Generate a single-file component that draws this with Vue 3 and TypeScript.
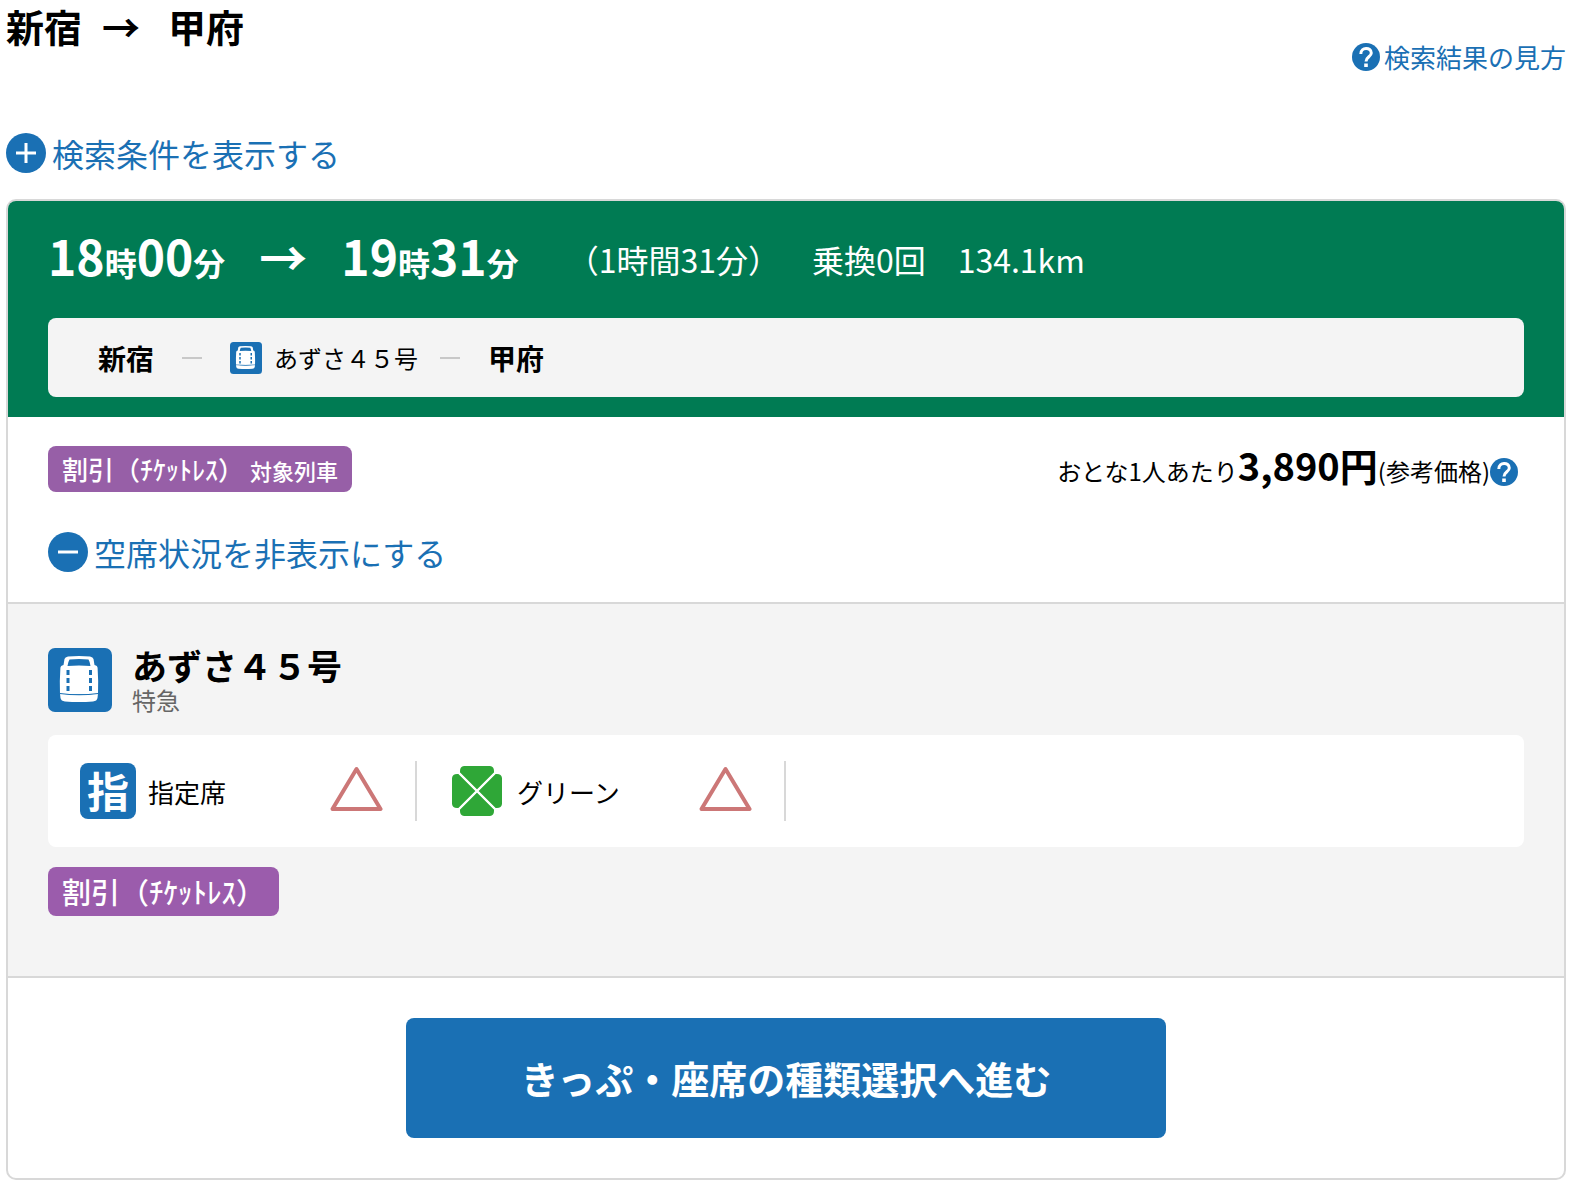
<script setup lang="ts">
import { defineComponent, h, ref } from 'vue'

interface Seat {
  kind: 'reserved' | 'green'
  label: string
}

const seats: Seat[] = [
  { kind: 'reserved', label: '指定席' },
  { kind: 'green', label: 'グリーン' },
]

const vacancyOpen = ref(true)

const TrainIcon = defineComponent({
  setup() {
    return () =>
      h('svg', { viewBox: '0 0 64 64', 'aria-hidden': 'true' }, [
        h('rect', { width: 64, height: 64, rx: 7, fill: '#1a70b4' }),
        h('path', {
          fill: '#fff',
          d: 'M20 8.500Q31 7.500 42 8.500Q45 9 45.500 11L46.500 17Q49.500 17.500 49.600 20Q50.500 32 50 46H12Q11.500 32 12.400 20Q12.500 17.500 15.500 17L16.500 11Q17 9 20 8.500Z',
        }),
        h('path', {
          fill: '#1a70b4',
          d: 'M21.500 11.500Q31 10.500 40.500 11.500Q42 14 42.500 18Q31 17 19.500 18Q20 14 21.500 11.500Z',
        }),
        h('path', {
          stroke: '#1a70b4',
          'stroke-width': 3,
          'stroke-dasharray': '5 3',
          fill: 'none',
          d: 'M20 22V43M42.500 22V43',
        }),
        h('path', {
          fill: '#fff',
          d: 'M12 45.500Q31 48 50 45.500L49.500 50Q49 53 45 53.500Q31 54.500 17 53.500Q13 53 12.500 50Z',
        }),
        h('path', {
          stroke: '#1a70b4',
          'stroke-width': 1.2,
          fill: 'none',
          d: 'M12 45.500Q31 48 50 45.500',
        }),
      ])
  },
})

const HelpIcon = defineComponent({
  setup() {
    return () =>
      h('svg', { viewBox: '0 0 28 28', 'aria-hidden': 'true' }, [
        h('circle', { cx: 14, cy: 14, r: 14, fill: '#1a70b4' }),
        h('path', {
          d: 'M8.800 11C8.800 3.800 19.300 3.800 19.300 10C19.300 13.800 14 13.800 14 18.500',
          fill: 'none',
          stroke: '#fff',
          'stroke-width': 3,
        }),
        h('rect', { x: 12.2, y: 20.5, width: 3.6, height: 3.5, fill: '#fff' }),
      ])
  },
})
</script>

<template>
  <main class="page" lang="ja">
    <header class="top">
      <h1 class="title">
        <span>新宿</span><span class="title-arrow">→</span><span>甲府</span>
      </h1>
      <a class="help-link" href="#guide"><HelpIcon class="help-icon" />検索結果の見方</a>
    </header>

    <button class="toggle" type="button" aria-expanded="false">
      <svg class="toggle-icon" viewBox="0 0 40 40" aria-hidden="true">
        <circle cx="20" cy="20" r="20" fill="#1a70b4" />
        <path d="M10 20H30M20 10V30" stroke="#fff" stroke-width="3" />
      </svg>
      検索条件を表示する
    </button>

    <article class="card">
      <header class="summary">
        <div class="times">
          <h2 class="clock">
            <span>18<small>時</small>00<small>分</small></span>
            <span class="clock-arrow">→</span>
            <span>19<small>時</small>31<small>分</small></span>
          </h2>
          <p class="meta">（1時間31分）　乗換0回　134.1km</p>
        </div>
        <div class="route">
          <strong>新宿</strong>
          <span class="dash"></span>
          <span class="leg"><TrainIcon class="leg-icon" />あずさ４５号</span>
          <span class="dash"></span>
          <strong>甲府</strong>
        </div>
      </header>

      <section class="fare">
        <div class="fare-row">
          <p class="badge">割引（ﾁｹｯﾄﾚｽ）<span class="badge-note">対象列車</span></p>
          <p class="price">
            おとな1人あたり<strong>3,890円</strong>(参考価格)<a class="price-help" href="#price" aria-label="参考価格について"><HelpIcon class="help-icon" /></a>
          </p>
        </div>
        <button class="toggle" type="button" :aria-expanded="vacancyOpen" @click="vacancyOpen = !vacancyOpen">
          <svg class="toggle-icon" viewBox="0 0 40 40" aria-hidden="true">
            <circle cx="20" cy="20" r="20" fill="#1a70b4" />
            <path d="M10 20H30" stroke="#fff" stroke-width="3" />
          </svg>
          空席状況を非表示にする
        </button>
      </section>

      <section v-show="vacancyOpen" class="vacancy">
        <div class="train">
          <TrainIcon class="train-icon" />
          <div>
            <h3 class="train-name">あずさ４５号</h3>
            <p class="train-kind">特急</p>
          </div>
        </div>
        <ul class="seats">
          <li v-for="seat in seats" :key="seat.kind" class="seat">
            <span v-if="seat.kind === 'reserved'" class="seat-mark" aria-hidden="true">指</span>
            <svg v-else class="seat-icon" viewBox="0 0 56 56" aria-hidden="true">
              <g fill="#2fa737">
                <path d="M15 3H41Q45 3.500 45 8V10L28 27L11 10V8Q11 3.500 15 3Z" />
                <path d="M15 53H41Q45 52.500 45 48V46L28 29L11 46V48Q11 52.500 15 53Z" />
                <path d="M3 15V41Q3.500 45 8 45H10L27 28L10 11H8Q3.500 11 3 15Z" />
                <path d="M53 15V41Q52.500 45 48 45H46L29 28L46 11H48Q52.500 11 53 15Z" />
              </g>
              <path d="M9 9L47 47M47 9L9 47" stroke="#fff" stroke-width="2.400" />
            </svg>
            <span class="seat-label">{{ seat.label }}</span>
            <svg class="seat-state" viewBox="0 0 54 54" role="img" aria-label="残席わずか">
              <path d="M27.500 5L51.500 45H3.500Z" fill="none" stroke="#cc7777" stroke-width="4" stroke-linejoin="round" />
            </svg>
          </li>
        </ul>
        <p class="badge badge-wide">割引（ﾁｹｯﾄﾚｽ）</p>
      </section>

      <footer class="actions">
        <button class="proceed" type="button">きっぷ・座席の種類選択へ進む</button>
      </footer>
    </article>
  </main>
</template>

<style>
body {
  margin: 0;
  background: #fff;
}
</style>

<style scoped>
.page {
  box-sizing: border-box;
  padding: 0 6px 6px;
  color: #000;
  font-family: "Noto Sans CJK JP", "Noto Sans", sans-serif;
  font-size: 24px;
}
h1, h2, h3, p, ul {
  margin: 0;
  padding: 0;
}
svg {
  display: block;
  flex: none;
}
button {
  padding: 0;
  border: 0;
  font-family: inherit;
  cursor: pointer;
}
.top {
  display: flex;
  align-items: flex-start;
  justify-content: space-between;
}
.title {
  display: flex;
  font-size: 38px;
  line-height: 52px;
}
.title-arrow {
  margin: 0 28px 0 20px;
}
.help-link {
  display: flex;
  align-items: center;
  gap: 4px;
  margin-top: 42px;
  color: #1a70b4;
  font-size: 26px;
  line-height: 30px;
  text-decoration: none;
}
.help-icon {
  width: 28px;
  height: 28px;
}
.toggle {
  display: flex;
  align-items: center;
  gap: 6px;
  background: none;
  color: #1a70b4;
  font-size: 32px;
  line-height: 40px;
}
.toggle-icon {
  width: 40px;
  height: 40px;
}
.page > .toggle {
  margin: 61px 0 26px;
}
.card {
  border: 2px solid #d8d8d8;
  border-radius: 10px;
  overflow: hidden;
}
.summary {
  padding: 17px 40px 20px;
  background: #007b53;
}
.times {
  display: flex;
  align-items: flex-end;
  gap: 48px;
  color: #fff;
}
.clock {
  display: flex;
  gap: 34px;
  font-size: 48px;
  line-height: 74px;
}
.clock small {
  font-size: 32px;
  line-height: 1;
}
.meta {
  font-size: 32px;
  line-height: 66px;
  text-spacing-trim: space-all;
}
.route {
  display: flex;
  align-items: center;
  gap: 28px;
  height: 79px;
  margin-top: 26px;
  padding: 0 50px;
  border-radius: 8px;
  background: #f4f4f4;
}
.route strong {
  font-size: 28px;
}
.dash {
  width: 20px;
  height: 2px;
  background: #c8c8c8;
}
.leg {
  display: flex;
  align-items: center;
  gap: 12px;
  margin-right: -6px;
}
.leg-icon {
  width: 32px;
  height: 32px;
}
.fare {
  padding: 29px 40px 30px;
  border-bottom: 2px solid #d8d8d8;
}
.fare-row {
  display: flex;
  align-items: flex-start;
  justify-content: space-between;
  margin-bottom: 40px;
}
.badge {
  display: flex;
  align-items: baseline;
  gap: 6px;
  width: fit-content;
  padding: 0 14px;
  border-radius: 8px;
  background: #975fa7;
  color: #fff;
  font-size: 26px;
  font-weight: 500;
  line-height: 46px;
}
.badge-note {
  font-size: 22px;
  line-height: 1;
}
.price {
  display: flex;
  align-items: baseline;
  padding-right: 6px;
  line-height: 38px;
}
.price strong {
  font-size: 38px;
}
.price-help {
  align-self: center;
  padding-top: 8px;
}
.vacancy {
  padding: 44px 40px 60px;
  border-bottom: 2px solid #d8d8d8;
  background: #f4f4f4;
}
.train {
  display: flex;
  gap: 20px;
}
.train-icon {
  width: 64px;
  height: 64px;
}
.train-name {
  font-size: 35px;
  line-height: 34px;
}
.train-kind {
  margin-top: 2px;
  color: #666;
  line-height: 32px;
}
.seats {
  display: flex;
  margin: 19px 0 20px;
  padding: 26px 0;
  border-radius: 8px;
  background: #fff;
  list-style: none;
}
.seat {
  box-sizing: border-box;
  display: flex;
  align-items: center;
  gap: 12px;
  width: 25%;
  height: 60px;
  padding: 0 32px;
  border-right: 2px solid #d8d8d8;
}
.seat-mark {
  width: 56px;
  height: 56px;
  border-radius: 8px;
  background: #1a70b4;
  color: #fff;
  font-size: 42px;
  font-weight: 700;
  line-height: 54px;
  text-align: center;
}
.seat-icon {
  width: 56px;
  height: 56px;
}
.seat-label {
  font-size: 26px;
}
.seat-state {
  width: 54px;
  height: 54px;
  margin-left: auto;
}
.badge-wide {
  background: #9b5cac;
  font-size: 29px;
  line-height: 49px;
}
.actions {
  display: flex;
  justify-content: center;
  padding: 40px;
}
.proceed {
  width: 760px;
  max-width: 100%;
  border-radius: 8px;
  background: #1a70b4;
  color: #fff;
  font-size: 38px;
  font-weight: 700;
  line-height: 120px;
}
</style>
